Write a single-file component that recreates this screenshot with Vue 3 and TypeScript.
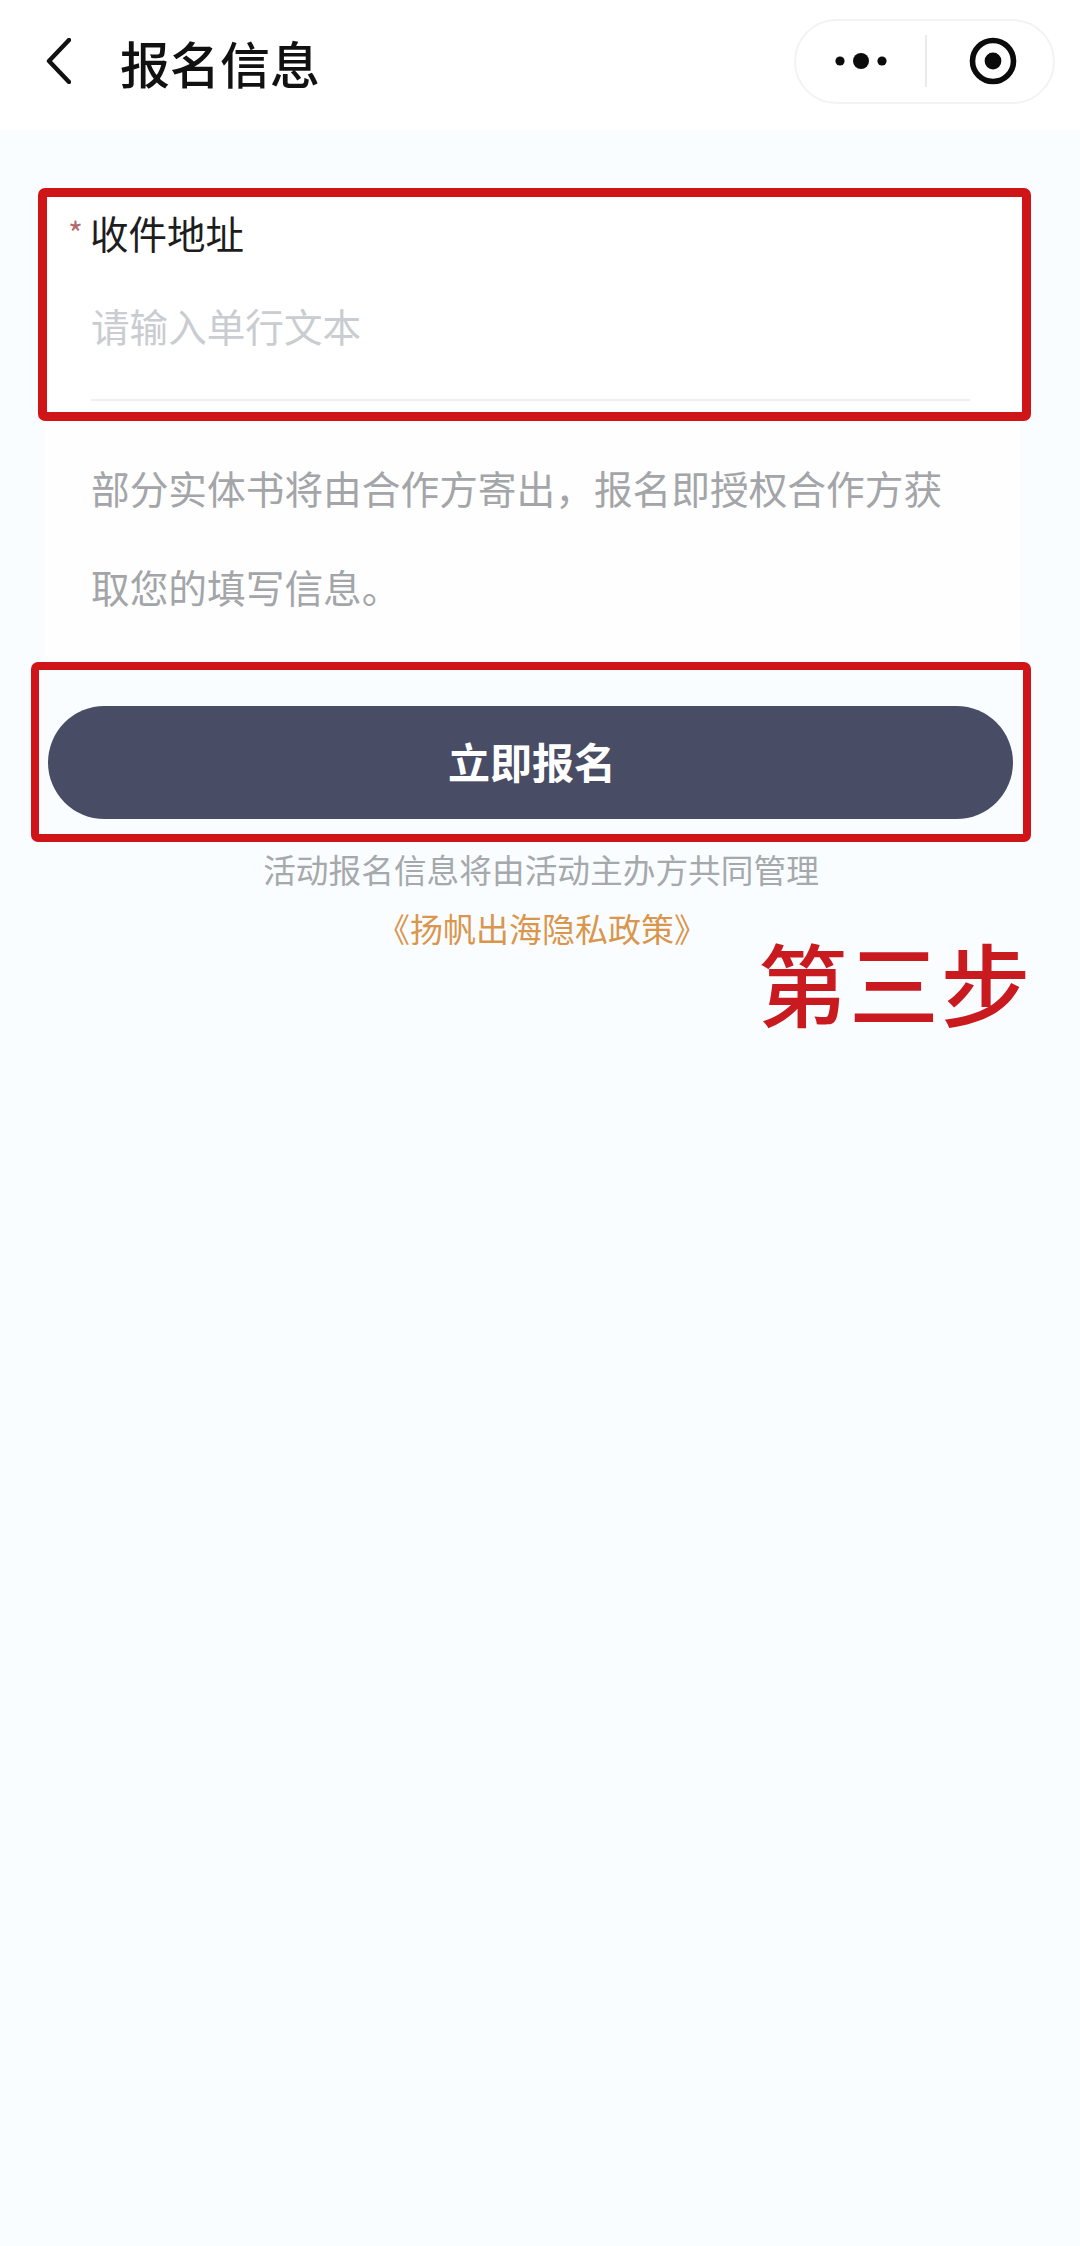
<script setup lang="ts">
const title: string = '报名信息'
</script>

<template>
  <div class="page">
    <header class="bar">
      <svg class="back" viewBox="0 0 26 46" width="26" height="46" aria-hidden="true">
        <path d="M24 2 L4 23 L24 44" fill="none" stroke="#111" stroke-width="4.4" stroke-linecap="round" stroke-linejoin="round" />
      </svg>
      <h1 class="title">{{ title }}</h1>
      <div class="capsule">
        <svg class="more" viewBox="0 0 60 20" width="60" height="20" aria-hidden="true">
          <circle cx="9" cy="10" r="4.6" fill="#0b0b0b" />
          <circle cx="30" cy="10" r="8" fill="#0b0b0b" />
          <circle cx="51" cy="10" r="4.6" fill="#0b0b0b" />
        </svg>
        <span class="split"></span>
        <svg class="target" viewBox="0 0 48 48" width="48" height="48" aria-hidden="true">
          <circle cx="24" cy="24" r="20.5" fill="none" stroke="#0b0b0b" stroke-width="5.6" />
          <circle cx="24" cy="24" r="8.4" fill="#0b0b0b" />
        </svg>
      </div>
    </header>

    <main class="main">
      <section class="field">
        <div class="label"><span class="star">*</span>收件地址</div>
        <div class="input">请输入单行文本</div>
      </section>

      <section class="notice">
        <p>部分实体书将由合作方寄出，报名即授权合作方获取您的填写信息。</p>
      </section>

      <section class="action">
        <button class="submit" type="button">立即报名</button>
      </section>

      <p class="hint">活动报名信息将由活动主办方共同管理</p>
      <p class="policy">《扬帆出海隐私政策》</p>

      <div class="step">第三步</div>
    </main>
  </div>
</template>

<style>
html,
body {
  margin: 0;
  background: #fafdff;
}
</style>

<style scoped>
.page {
  width: 1080px;
  min-height: 2246px;
  background: #fafdff;
  font-family: "Noto Sans CJK SC", "Noto Sans", sans-serif;
}

.bar {
  display: flex;
  align-items: center;
  box-sizing: border-box;
  height: 130px;
  padding: 0 25px 8px 45px;
  background: #ffffff;
}

.back {
  flex: none;
}

.title {
  margin: 2px 0 0 49px;
  font-size: 50px;
  line-height: 60px;
  font-weight: 500;
  color: #111111;
}

.capsule {
  display: flex;
  align-items: center;
  box-sizing: border-box;
  width: 261px;
  height: 85px;
  margin-left: auto;
  padding-left: 35px;
  border: 2px solid #f2f3f3;
  border-radius: 43px;
  background: #ffffff;
}

.more {
  flex: none;
}

.split {
  flex: none;
  width: 2px;
  height: 52px;
  margin-left: 34px;
  background: #e9eaea;
}

.target {
  flex: none;
  margin-left: 42px;
}

.main {
  position: relative;
  padding-top: 58px;
}

.field {
  box-sizing: border-box;
  width: 993px;
  height: 233px;
  margin-left: 38px;
  padding: 10px 52px 0 21px;
  border: 9px solid #cf1518;
  border-radius: 7px;
  background: #ffffff;
}

.label {
  display: flex;
  align-items: center;
  height: 50px;
  font-size: 38.5px;
  line-height: 50px;
  color: #1d1d1d;
}

.star {
  width: 22px;
  font-size: 32px;
  line-height: 32px;
  color: #b56a70;
}

.input {
  box-sizing: border-box;
  height: 144px;
  margin: 0 0 0 23px;
  padding-top: 43px;
  border-bottom: 2px solid #eff0f1;
  font-size: 38.6px;
  line-height: 50px;
  color: #c9ccd0;
}

.notice {
  box-sizing: border-box;
  width: 975px;
  height: 241px;
  margin-left: 45px;
  padding: 17px 76px 0 46px;
  background: #fefeff;
}

.notice p {
  margin: 0;
  font-size: 38.7px;
  line-height: 99px;
  color: #a3a5a8;
}

.action {
  box-sizing: border-box;
  width: 1000px;
  height: 180px;
  margin-left: 31px;
  padding: 36px 10px 0 9px;
  border: 8px solid #cf1518;
  border-radius: 7px;
}

.submit {
  display: block;
  width: 100%;
  height: 113px;
  padding: 0 0 5px 3px;
  border: 0;
  border-radius: 57px;
  background: #484c64;
  color: #ffffff;
  font-family: inherit;
  font-size: 42px;
  font-weight: 700;
}

.hint {
  margin: 5px 0 0;
  padding-left: 2px;
  text-align: center;
  font-size: 32.7px;
  line-height: 44px;
  color: #a6a9ac;
}

.policy {
  margin: 15px 0 0;
  padding-left: 4px;
  text-align: center;
  font-size: 33px;
  line-height: 44px;
  color: #d9964c;
}

.step {
  position: absolute;
  top: 796px;
  right: 48px;
  font-size: 90px;
  letter-spacing: 1.5px;
  line-height: 110px;
  font-weight: 500;
  color: #c81a1f;
}
</style>
